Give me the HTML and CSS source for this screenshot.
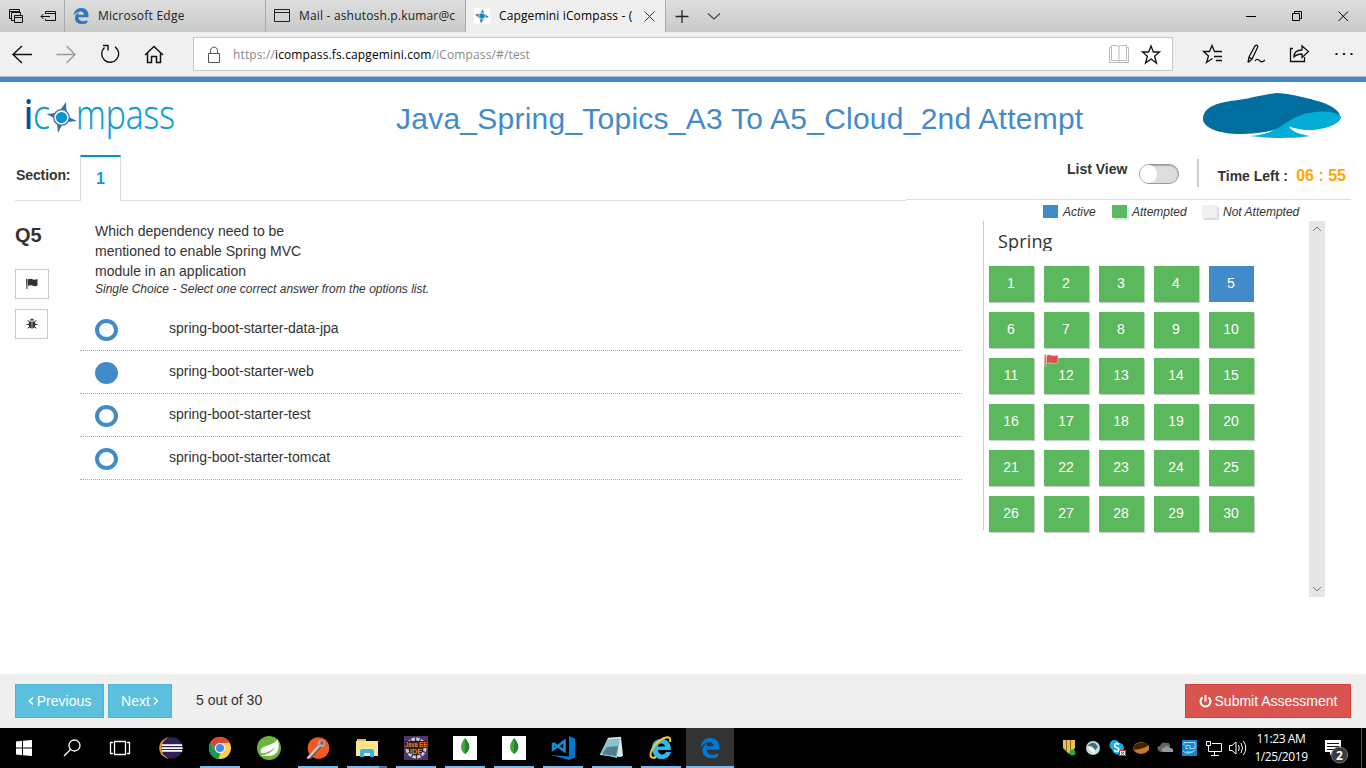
FILE: index.html
```html
<!DOCTYPE html>
<html lang="en">
<head>
<meta charset="utf-8">
<title>Capgemini iCompass</title>
<link rel="stylesheet" href="styles.css">
</head>
<body>
<div class="tabs">
  <div class="tab-tools">
    <svg width="64" height="32" fill="none" stroke="#111"><path d="M11.500 18.500H9.500V9.500H19.500V12M9 11.500H20M14 20.500H11.500V12.500H20.500V15M14.500 15.500H22.500V22.500H14.500ZM14 17.500H23"/><path d="M45.500 13V11.500H55.500V20.500H45.500V19M45 13.500H56M41 16.500H50M43.500 14L41 16.500L43.500 19"/></svg>
  </div>
  <div class="tab">
    <svg class="favicon" width="16" height="16" viewBox="0 0 16 16"><path fill="#3277bc" d="M0.500 7.500C1 2.500 4.500 0 8.200 0C13 0 15.500 3.400 15.500 7.500V9.300H5.300C5.600 13.700 11 14.300 14.300 12.100V15C8.500 17.600 2 15.600 2 10.200C2 7 4.100 5 6.200 4.200C5.500 5.100 5.300 6 5.200 6.700H10.900C10.900 2.300 4.700 2 0.500 7.500Z"/></svg>
    <span class="tab-text t1">Microsoft Edge</span>
  </div>
  <div class="tab">
    <svg class="favicon" width="16" height="16" fill="none" stroke="#222"><path d="M.5 1.500H15.500V13.500H.5ZM0 4.500H16"/></svg>
    <span class="tab-text t2">Mail - ashutosh.p.kumar@c</span>
  </div>
  <div class="tab active">
    <svg class="favicon" width="16" height="16"><path fill="#fff" d="M0 0H16V16H0Z"/><path fill="#4e7ca8" d="M9 1L10 5.500L15 9L10.500 10L7 15.500L5.500 10.500L1 6.500L6 5.500Z"/><circle cx="8" cy="8" r="3.500" fill="#fff"/><circle cx="8" cy="8" r="2.800" fill="#058fc8"/></svg>
    <span class="tab-text t3">Capgemini iCompass - (</span>
    <svg class="close" width="11" height="11" stroke="#333"><path d="M.5.5L10.500 10.500M10.500.5L.5 10.500"/></svg>
  </div>
  <svg class="newtab" width="60" height="32" fill="none"><path d="M9.500 16.500H22.500M16 10V23" stroke="#222" stroke-width="1.300"/><path d="M42 13.500L48 19L54 13.500" stroke="#444" stroke-width="1.200"/></svg>
  <svg class="winctl" width="130" height="32" fill="none" stroke="#000"><path d="M10 16.500H20M56.500 13.500H63.500V20.500H56.500ZM58.500 13V11.500H65.500V18.500H64M102.500 11.500L112 21M112 11.500L102.500 21"/></svg>
</div>

<div class="toolbar">
  <svg class="nav" width="193" height="44" fill="none" stroke="#111" stroke-width="1.400"><path d="M32 22.500H13M22 14L13 22.500L22 31"/><path stroke="#999" d="M56.500 22.500H75M66.500 14L75 22.500L66.500 31"/><path d="M104.500 15.500A8.500 8.500 0 1 0 115 14.800M103 13.500H108V18.500"/><path stroke-width="1.500" d="M145 23L154 14.500L163 23M147.500 21.500V30.500H151.500V24.500H156.500V30.500H160.500V21.500"/></svg>
  <div class="address">
    <svg class="lock" width="14" height="18" fill="none" stroke="#555"><path d="M1.500 7.500H12.500V16.500H1.500ZM3.500 7V4.500C3.500 0 10.500 0 10.500 4.500V7"/></svg>
    <span class="url">https://<b>icompass.fs.capgemini.com</b>/iCompass/#/test</span>
    <svg class="book" width="56" height="32" fill="none"><path stroke="#bbb" d="M2.500 9.500H.5V24.500H19.500V9.500H17.500M2.500 7.500H8.500L10 8.500L11.500 7.500H17.500V22.500H11.500L10 23.500L8.500 22.500H2.500ZM10 8V24"/><path stroke="#111" stroke-width="1.300" d="M42 8L44.400 14H50.500L45.600 18.300L47.500 25L42 21L36.500 25L38.400 18.300L33.500 14H39.600Z"/></svg>
  </div>
  <svg class="actions" width="164" height="44" fill="none" stroke="#111" stroke-width="1.300"><path d="M10.500 26.500L4.500 30.500L6.500 24L1.500 19.500H7.500L10 13.500L12.500 19.500H20M12 24.500H20M14 28.500H20"/><path d="M46 30.500L47 25L53 14C55 12 56.500 14 55.500 15.500L50 27L46 30.500M47 25L50 27M53 29C55 26 57 28 58 29S61 30 63 28"/><path d="M91 16.500H88.500V29.500H102.500V25M92 25C92 20 95 18 100 18V14L106.500 19.500L100 25.500V22C96 22 94 23 92 25Z"/><path stroke-width="2" d="M133.500 22H135.500M141 22H143M148.500 22H150.500"/></svg>
</div>

<header class="header">
  <svg class="logo" width="160" height="60" role="img">
    <text class="logo-i" x="4" y="37.500" textLength="9" lengthAdjust="spacingAndGlyphs">i</text>
    <text class="logo-t" x="13" y="37.500" textLength="17" lengthAdjust="spacingAndGlyphs">c</text>
    <text class="logo-t" x="56" y="37.500" textLength="99" lengthAdjust="spacingAndGlyphs">mpass</text>
    <path fill="#3c6ea5" d="M46 11L46.500 20L48.500 26L57 30L47 31L42 34L38 42L37 33L34 27L26.500 23L36 22L41 18Z"/>
    <circle cx="41.500" cy="26.500" r="7.800" fill="#fff" stroke="#416fa3" stroke-width="1.300"/><circle cx="41.500" cy="26.500" r="5.600" fill="#0096d0"/>
  </svg>
  <h1>Java_Spring_Topics_A3 To A5_Cloud_2nd Attempt</h1>
  <svg class="brand" width="140" height="47"><path fill="#006f9f" d="M1 27C1 14 18 10 36 8C51 6 64 2 75 1C91 2 105 6 119 10C131 14 138 19 138.500 26L105 24C90 30 78 42 35 42C14 41 1 35 1 27Z"/><path fill="#04add6" d="M48 44C60 43 66 41 72 38C84 33 93 20 121 19.600C130 20 137 22 139 25C138 33 120 38 108 38C98 38 92 36 87 34.500C90 40 100 43 108 44C92 47 62 46 48 44Z"/></svg>
</header>

<div class="section-row">
  <div class="section-left"><span class="section-label">Section:</span><span class="section-tab">1</span><span class="section-fill"></span></div>
  <div class="section-right">
    <span class="list-view">List View</span>
    <span class="toggle"><span class="knob"></span></span>
    <span class="divider"></span>
    <span class="time-left">Time Left :</span>
    <span class="time">06 : 55</span>
  </div>
</div>

<main class="main">
  <aside class="side">
    <h2>Q5</h2>
    <div class="tool flag-tool"><svg width="12" height="12"><path fill="#333" d="M0 1H1.500V11H.5ZM2 1.500C5-.5 7 3 11.500 1V7.500C8 9.500 5.500 6 2 8Z"/></svg></div>
    <div class="tool"><svg width="12" height="12"><path fill="#333" d="M4 2.500C4 0 8 0 8 2.500ZM2.800 3.500H5.700V10.500C3.500 10.300 2.800 9 2.800 7.500ZM6.300 3.500H9.200V7.500C9.200 9 8.500 10.300 6.300 10.500Z"/><path stroke="#333" d="M1.500 2L3.500 4M10.500 2L8.500 4M.5 6.500H3M9 6.500H11.500M1.500 10.500L3.500 8.500M10.500 10.500L8.500 8.500"/></svg></div>
  </aside>
  <section class="question">
    <p class="q-text">Which dependency need to be<br>mentioned to enable Spring MVC<br>module in an application</p>
    <p class="q-hint">Single Choice - Select one correct answer from the options list.</p>
    <div class="option"><span class="radio"></span>spring-boot-starter-data-jpa</div>
    <div class="option"><span class="radio chosen"></span>spring-boot-starter-web</div>
    <div class="option"><span class="radio"></span>spring-boot-starter-test</div>
    <div class="option"><span class="radio"></span>spring-boot-starter-tomcat</div>
  </section>
  <section class="overview">
    <div class="legend">
      <span class="swatch blue"></span><span class="lg-active">Active</span>
      <span class="swatch green"></span><span class="lg-att">Attempted</span>
      <span class="swatch grey"></span><span>Not Attempted</span>
    </div>
    <div class="panel">
      <div class="pool">
        <h3>Spring</h3>
        <div class="grid">
          <span class="cell">1</span><span class="cell">2</span><span class="cell">3</span><span class="cell">4</span><span class="cell current">5</span>
          <span class="cell">6</span><span class="cell">7</span><span class="cell">8</span><span class="cell">9</span><span class="cell">10</span>
          <span class="cell">11</span><span class="cell">12<svg class="mark" width="15" height="13"><path fill="#d9534f" stroke="#f3d3cf" stroke-width=".6" d="M.5.5H2V12.500H.5ZM2.500 1.500C6-.5 8 3 14 1V9C10 11 7 7.500 2.500 9.500Z"/></svg></span><span class="cell">13</span><span class="cell">14</span><span class="cell">15</span>
          <span class="cell">16</span><span class="cell">17</span><span class="cell">18</span><span class="cell">19</span><span class="cell">20</span>
          <span class="cell">21</span><span class="cell">22</span><span class="cell">23</span><span class="cell">24</span><span class="cell">25</span>
          <span class="cell">26</span><span class="cell">27</span><span class="cell">28</span><span class="cell">29</span><span class="cell">30</span>
        </div>
      </div>
      <div class="scroll">
        <svg width="16" height="16" fill="none" stroke="#777"><path d="M4 10L8 6L12 10"/></svg>
        <svg width="16" height="16" fill="none" stroke="#777"><path d="M4 6L8 10L12 6"/></svg>
      </div>
    </div>
  </section>
</main>

<footer class="footer">
  <span class="btn prev"><svg width="6" height="10" fill="none" stroke="#fff" stroke-width="1.600"><path d="M5 1.500L1.500 5L5 8.500"/></svg>Previous</span>
  <span class="btn next">Next<svg width="6" height="10" fill="none" stroke="#fff" stroke-width="1.600"><path d="M1 1.500L4.500 5L1 8.500"/></svg></span>
  <span class="count">5 out of 30</span>
  <span class="btn submit"><svg width="13" height="13" fill="none" stroke="#fff" stroke-width="2"><path d="M3.500 2.500A5 5 0 1 0 9.500 2.500M6.500 0V6.500"/></svg>Submit Assessment</span>
</footer>

<div class="taskbar">
  <svg class="system" width="144" height="40"><path fill="#fff" d="M16 13.500L22 12.800V19.500H16ZM23 12.700L32 12V19.500H23ZM16 20.500H22V27.200L16 26.500ZM23 20.500H32V28L23 27.200Z"/><g fill="none" stroke="#fff" stroke-width="1.300"><circle cx="74.500" cy="17.500" r="5.500"/><path d="M70.500 21.500L64 28M114.500 13.500H125.500V26.500H114.500ZM113 14.500H110.500V25.500H113M127 14.500H129.500V25.500H127"/></g></svg>
  <div class="apps">
    <span class="app"><svg width="24" height="24"><path fill="#f59a23" d="M10 1C-3 4-3 20 10 23C2 18 2 6 10 1Z"/><circle cx="13" cy="12" r="10.700" fill="#2c2255"/><path fill="#fff" d="M3 8.300H23.200V10H3ZM2.500 11.200H23.500V12.900H2.500ZM3 14H23.200V15.700H3Z"/></svg></span>
    <span class="app open"><svg width="24" height="24"><circle cx="12" cy="12" r="11" fill="#fcd04b"/><path fill="#db4437" d="M2.500 6.500A11 11 0 0 1 21.600 6.800L12 7L7.500 14Z"/><path fill="#109d59" d="M2.500 6.500L7.500 14.500L12.500 16.500L10.500 23A11 11 0 0 1 2.500 6.500Z"/><circle cx="12" cy="12" r="5.200" fill="#f4f4f4"/><circle cx="12" cy="12" r="4" fill="#4687f4"/></svg></span>
    <span class="app"><svg width="24" height="24"><circle cx="12" cy="12" r="12" fill="#6db33f"/><path fill="#fff" d="M20.500 3C23 11 21.500 18 15 19.500C11 20.500 6 20 4 19.500C10 18.500 16 16 18 11C14 15.500 9 17 4 17.500C1 8 17 11 20.500 3Z"/></svg></span>
    <span class="app open"><svg width="24" height="24"><circle cx="12.500" cy="12" r="10.800" fill="#f15a24"/><path stroke="#795348" stroke-width="4" d="M3 22L14 10"/><path stroke="#c5cbd0" stroke-width="2.500" d="M1.500 22.500L14 9"/><circle cx="15.500" cy="7.500" r="3.600" fill="#b9a59c"/><circle cx="16" cy="7" r="1.700" fill="#666"/></svg></span>
    <span class="app open stacked"><svg width="24" height="24"><path fill="#e8b746" d="M2 3H11V6H2Z"/><path fill="#ffe48c" d="M1 5H23V20H1Z"/><path fill="#36b2e8" d="M5 21V15Q5 13 7 13H17Q19 13 19 15V21H15V17H9V21Z"/></svg></span>
    <span class="app open"><svg class="ide" width="24" height="24"><path fill="#50346b" d="M0 0H24V24H0Z"/><circle cx="12" cy="12" r="9" fill="#222" stroke="#ccc" stroke-width="3" stroke-dasharray="3.500 1.200"/><path fill="#282029" d="M1 5H23V12H1ZM6 12H18V18H6Z"/><text class="ee" x="1" y="11" textLength="22" lengthAdjust="spacingAndGlyphs">Java EE</text><text class="ee" x="6" y="18" textLength="12" lengthAdjust="spacingAndGlyphs">IDE</text></svg></span>
    <span class="app open"><svg width="24" height="24"><path fill="#fff" d="M0 0H24V24H0Z"/><path fill="#45a538" d="M12 2C18 9 17.500 14 12 18C6.500 14 7 8 12 2Z"/><path fill="#238238" d="M12 2C18 9 17.500 14 12 18V20Z"/></svg></span>
    <span class="app open"><svg width="24" height="24"><path fill="#fff" d="M0 0H24V24H0Z"/><path fill="#45a538" d="M12 2C18 9 17.500 14 12 18C6.500 14 7 8 12 2Z"/><path fill="#238238" d="M12 2C18 9 17.500 14 12 18V20Z"/></svg></span>
    <span class="app open"><svg width="24" height="24"><path fill="#007acc" d="M18 0L24 2.500V21.500L18 24L0 19L18 20.500Z"/><path fill="none" stroke="#158ed8" stroke-width="2.500" d="M2 7L13.500 15V5L2 13.500V7"/></svg></span>
    <span class="app open"><svg width="24" height="24"><path fill="#dde7e8" d="M8 2L21 1L23 20L20 21L0 19Z"/><path fill="#8bc3cb" d="M8 3L20 2L17 22L0 18Z"/><path fill="#4c808c" d="M7 11L18 10L16 20L2 18Z"/><path stroke="#eee" stroke-width="1.500" stroke-dasharray="1.500 1" d="M8 2.500L21 1.500"/></svg></span>
    <span class="app open"><svg width="24" height="24"><path fill="#31b8ed" d="M3 12C3 6 7 3 12.500 3C18.500 3 22 7 22 14H9C9 19 16 20 17 16H22C20 26 3 26 3 12ZM9 10.500H16C16 6.500 9 6.500 9 10.500Z"/><path fill="none" stroke="#f8ce27" stroke-width="2" d="M21 6C23-2 13 1 6 9C-1 18 1 24 7 21"/></svg></span>
    <span class="app open focus"><svg width="24" height="24" viewBox="-1.500 -1.500 19 19"><path fill="#0078d7" d="M0.500 7.500C1 2.500 4.500 0 8.200 0C13 0 15.500 3.400 15.500 7.500V9.300H5.300C5.600 13.700 11 14.300 14.300 12.100V15C8.500 17.600 2 15.600 2 10.200C2 7 4.100 5 6.200 4.200C5.500 5.100 5.300 6 5.200 6.700H10.900C10.900 2.300 4.700 2 0.500 7.500Z"/></svg></span>
  </div>
  <svg class="tray" width="190" height="40">
    <path fill="#e6c15a" d="M6 12H18V20L15 24L12 26L9 23L6 20Z"/><path stroke="#8a6a1d" d="M9.500 12V23M13.500 12V22"/><circle cx="15.500" cy="24.500" r="3" fill="#20ad3d"/>
    <circle cx="36" cy="20" r="7" fill="#c7ddd3"/><path fill="#426d85" d="M30 18Q37 11 41 19L38 22Q35 17 30 18Z"/><path fill="#fff" d="M31 19Q38 18 38 26L34 23Z"/>
    <circle cx="57.500" cy="17" r="5" fill="#16aee8"/><circle cx="61" cy="20.500" r="6" fill="#16aee8"/><path fill="none" stroke="#fff" stroke-width="1.700" d="M62 16.500C59 14 56 17 58.500 19C63 20.500 63 23 60 23.500L57 22.500"/><path fill="#fff" d="M62 22H69V28H62Z"/><path stroke="#d22" fill="none" d="M62.500 22.500H68.500V27.500H62.500ZM64 24L67 26.500M67 24L64 26.500"/>
    <ellipse cx="84" cy="20" rx="8" ry="6" fill="#a65615"/><path fill="#3b220b" d="M76 18Q84 12 92 17Q88 20 78 22Z"/><path fill="#c77b2d" d="M77 22Q88 21 92 17V22Q84 29 77 22Z"/>
    <path fill="#666" d="M101 22Q99 18 103 18Q105 13 109 15Q113 14 113 19L106 24Q102 24 101 22Z"/><path fill="#999" d="M106 24Q103 20 107 20Q110 16 113 20Q117 20 116 24Z"/>
    <path fill="#1686ce" d="M125 12H140V28H125Z"/><path fill="none" stroke="#a9dcf5" d="M127 17V14.500H138V20.500H133V17.500H129V20.500H131M126 23Q131 28 138 22M129 24H136"/>
    <path fill="none" stroke="#fff" d="M149.500 13.500H153.500V17.500H149.500ZM155 15.500H164.500V23.500H151.500V18M157.500 24V27M154 27.500H162"/>
    <path fill="none" stroke="#fff" d="M172.500 17.500H175L179 14V26L175 22.500H172.500ZM181.500 17Q183 20 181.500 23M184 15Q187 20 184 25M186.500 13Q191 20 186.500 27"/>
  </svg>
  <div class="clock"><span>11:23 AM</span><span>1/25/2019</span></div>
  <svg class="notice" width="49" height="40"><path fill="#fff" d="M8 12H24V24H17L13 27V24H8Z"/><path stroke="#111" d="M10 15.500H22M10 18.500H22M10 21.500H18"/><circle cx="22.500" cy="27" r="8" fill="#3b3b3b" stroke="#777"/><text class="badge" x="19" y="31.500">2</text><path stroke="#555" d="M44.500 0V40"/></svg>
</div>
</body>
</html>
```
FILE: styles.css
```css
* { box-sizing: border-box; }
body { margin: 0; width: 1366px; height: 768px; overflow: hidden; display: flex; flex-direction: column; background: #fff; color: #333; font: 14px/20px "Liberation Sans", Arial, sans-serif; }
h1, h2, h3, p { margin: 0; }
svg { display: block; flex: none; }

.tabs { height: 32px; flex: none; display: flex; background: linear-gradient(#dedede, #c8cac9); font: 12px/32px "Open Sans", "Noto Sans", sans-serif; color: #222; }
.tab-tools { width: 65px; flex: none; border-right: 1px solid #aaa; }
.tab { width: 201px; flex: none; display: flex; padding-left: 8px; border-right: 1px solid #aaa; }
.tab:nth-child(3) { width: 200px; }
.tab.active { width: 200px; background: #efefef; color: #000; }
.favicon { margin: 8px 9px 0 0; }
.tab-text { white-space: nowrap; }
.t1 { letter-spacing: .24px; }
.t2 { letter-spacing: .18px; }
.t3 { letter-spacing: .13px; width: 134px; overflow: hidden; }
.close { margin: 11px 0 0 11px; }
.winctl { margin-left: auto; }

.toolbar { height: 45px; flex: none; display: flex; background: #f0f0f0; border-bottom: 1px solid #bbb; }
.address { width: 980px; flex: none; height: 34px; margin-top: 5px; display: flex; background: #fff; border: 1px solid #c6c6c6; }
.lock { margin: 8px 0 0 13px; }
.url { margin-left: 12px; font: 12px/33px "Open Sans", "Noto Sans", sans-serif; letter-spacing: .13px; color: #8a8a8a; white-space: nowrap; }
.url b { font-weight: 400; color: #000; }
.book { margin: 0 7px 0 auto; }
.actions { margin-left: 29px; }

.header { height: 78px; flex: none; display: flex; align-items: flex-start; border-top: 5px solid #428bca; padding: 9px 24px 0 20px; }
.logo { overflow: visible; }
.logo-i { font: 600 40px "Open Sans", sans-serif; fill: #00529b; }
.logo-t { font: 300 40px "Open Sans", sans-serif; fill: #0d9bcf; stroke: #0d9bcf; stroke-width: .3px; }
.header h1 { margin: 8px 0 0 216px; font-size: 30px; line-height: 40px; font-weight: 400; letter-spacing: .24px; color: #428bca; white-space: nowrap; }
.brand { margin: 1px 0 0 auto; }

.section-row { height: 46px; flex: none; display: flex; padding: 0 15px; font-weight: 700; }
.section-left { width: 891px; display: flex; }
.section-label { width: 65px; padding-top: 10px; padding-left: 1px; border-bottom: 1px solid #ddd; letter-spacing: -.1px; }
.section-tab { width: 41px; border: 1px solid #ddd; border-top: 2px solid #0092cf; border-bottom: 0; color: #1a96cf; font-size: 16px; text-align: center; padding-top: 12px; }
.section-fill { flex: 1; border-bottom: 1px solid #ddd; }
.section-right { flex: 1; height: 45px; border-bottom: 1px solid #ddd; display: flex; padding: 4px 5px 0 161px; white-space: nowrap; }
.toggle { width: 40px; height: 20px; margin: 5px 0 0 12px; border: 1px solid #999; border-radius: 10px; background: #ddd; box-shadow: inset 0 1px 1px #aaa; }
.knob { display: block; width: 17px; height: 18px; border-radius: 9px; background: #fff; }
.divider { width: 2px; height: 28px; margin-left: 18px; background: #ccc; }
.time-left { margin: 7px 0 0 18px; }
.time { margin: 7px 0 0 auto; font-size: 16px; color: #ffa500; }

.main { flex: 1; display: flex; padding-left: 15px; }
.side { width: 65px; padding-top: 24px; }
.side h2 { font-size: 20px; line-height: 20px; margin-bottom: 24px; }
.tool { width: 33px; height: 30px; margin-bottom: 10px; border: 1px solid #ccc; display: flex; align-items: center; justify-content: center; }
.flag-tool { width: 34px; }
.question { width: 882px; padding-top: 20px; }
.q-text { padding-left: 15px; }
.q-hint { padding-left: 15px; height: 27px; font-size: 12px; line-height: 16px; font-style: italic; }
.option { height: 43px; border-bottom: 1px dotted #aaa; display: flex; padding-left: 15px; line-height: 40px; }
.radio { width: 23px; height: 22px; margin: 11px 51px 0 0; border: 4px solid #428bca; border-radius: 50%; }
.radio.chosen { background: #428bca; }
.overview { width: 363px; margin-left: 21px; }
.legend { height: 20px; display: flex; padding-left: 60px; font-size: 12px; line-height: 22px; font-style: italic; white-space: nowrap; }
.swatch { width: 15px; height: 13px; margin: 4px 5px 0 0; }
.blue { background: #428bca; }
.green { background: #5cb85c; box-shadow: 2px 2px 0 #cfe6f7; }
.grey { background: #f0f0f0; box-shadow: 2px 2px 0 #ddd; margin-right: 6px; }
.lg-active { width: 49px; }
.lg-att { width: 70px; }
.panel { display: flex; }
.pool { width: 326px; height: 309px; border-left: 1px solid #ccc; padding-left: 5px; }
.pool h3 { height: 30px; margin: 0 0 15px 9px; overflow: hidden; font: 400 18px/40px "Open Sans", sans-serif; letter-spacing: .15px; color: #333; }
.grid { display: grid; grid-template-columns: repeat(5, 45px); grid-auto-rows: 36px; gap: 10px; }
.cell { position: relative; background: #5cb85c; color: #fff; text-align: center; line-height: 34px; padding-right: 1px; box-shadow: 1px 1px 1px #ccc; }
.current { background: #428bca; box-shadow: none; }
.mark { position: absolute; left: 0; top: -4px; }
.scroll { width: 16px; height: 376px; background: #e6e6e6; display: flex; flex-direction: column; justify-content: space-between; }

.footer { height: 54px; flex: none; display: flex; padding: 10px 15px; background: #efefef; }
.btn { height: 34px; display: flex; align-items: center; justify-content: center; gap: 3px; color: #fff; border: 1px solid #46b8da; background: #5bc0de; white-space: nowrap; }
.prev { width: 89px; }
.next { width: 64px; margin-left: 4px; }
.count { margin: 6px 0 0 24px; }
.submit { width: 166px; margin-left: auto; background: #d9534f; border-color: #d43f3a; }

.taskbar { height: 40px; flex: none; display: flex; background: #000; color: #fff; }
.apps { display: flex; gap: 9px; padding-left: 7px; }
.app { width: 40px; height: 40px; padding: 8px 8px 0; }
.open { border-bottom: 2px solid #76b9ed; }
.stacked { border-image: linear-gradient(90deg, #76b9ed 78%, #53799a 78%) 2; border-top: 0; border-left: 0; border-right: 0; }
.focus { width: 48px; margin-left: -4px; padding-left: 12px; background: #333; }
.ide { overflow: visible; }
.ee { font: 700 7px "Liberation Sans", sans-serif; fill: #f47b20; }
.tray { margin-left: auto; }
.clock { width: 68px; padding-top: 2px; display: flex; flex-direction: column; align-items: center; font: 12px/18px "Open Sans", "Noto Sans", sans-serif; letter-spacing: -.4px; }
.notice { margin-left: 2px; }
.badge { font: 700 12px "Open Sans", sans-serif; fill: #fff; }
```
